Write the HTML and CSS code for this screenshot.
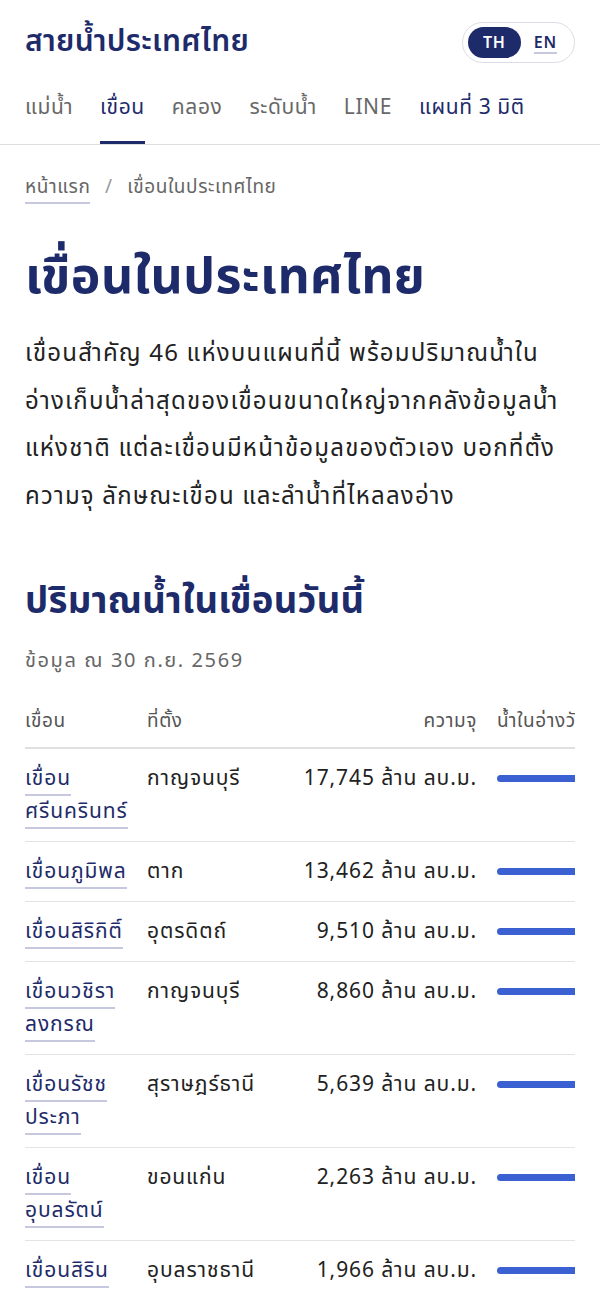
FILE: index.html
```html
<!DOCTYPE html>
<html lang="th">
<head>
  <meta charset="UTF-8">
  <title>เขื่อนในประเทศไทย - สายน้ำประเทศไทย</title>
  <link rel="stylesheet" href="styles.css">
</head>
<body>
  <header class="site-header">
    <div class="brand-row">
      <a class="brand" href="#">สายน้ำประเทศไทย</a>
      <div class="lang-toggle">
        <span class="lang active">TH</span>
        <a class="lang" href="#">EN</a>
      </div>
    </div>
    <nav class="main-nav">
      <a href="#">แม่น้ำ</a>
      <a href="#" class="current">เขื่อน</a>
      <a href="#">คลอง</a>
      <a href="#">ระดับน้ำ</a>
      <a href="#">LINE</a>
      <a href="#" class="feature">แผนที่ 3 มิติ</a>
    </nav>
  </header>

  <main class="content">
    <div class="breadcrumb">
      <a href="#">หน้าแรก</a>
      <span class="sep">/</span>
      <span>เขื่อนในประเทศไทย</span>
    </div>

    <h1>เขื่อนในประเทศไทย</h1>
    <p class="lead">เขื่อนสำคัญ 46 แห่งบนแผนที่นี้ พร้อมปริมาณน้ำใน<wbr>อ่างเก็บน้ำล่าสุดของเขื่อนขนาดใหญ่จากคลังข้อมูลน้ำ<wbr>แห่งชาติ แต่ละเขื่อนมีหน้าข้อมูลของตัวเอง บอกที่ตั้ง ความจุ ลักษณะเขื่อน และลำน้ำที่ไหลลงอ่าง</p>

    <h2>ปริมาณน้ำในเขื่อนวันนี้</h2>
    <p class="as-of">ข้อมูล ณ 30 ก.ย. 2569</p>

    <div class="table-wrap">
      <table class="dams">
        <thead>
          <tr>
            <th class="col-name">เขื่อน</th>
            <th class="col-loc">ที่ตั้ง</th>
            <th class="col-cap">ความจุ</th>
            <th class="col-fill">น้ำในอ่างวันนี้</th>
          </tr>
        </thead>
        <tbody>
          <tr>
            <td class="col-name"><a href="#">เขื่อน<wbr>ศรีนครินทร์</a></td>
            <td class="col-loc">กาญจนบุรี</td>
            <td class="col-cap">17,745 ล้าน ลบ.ม.</td>
            <td class="col-fill"><span class="bar"></span></td>
          </tr>
          <tr>
            <td class="col-name"><a href="#">เขื่อนภูมิพล</a></td>
            <td class="col-loc">ตาก</td>
            <td class="col-cap">13,462 ล้าน ลบ.ม.</td>
            <td class="col-fill"><span class="bar"></span></td>
          </tr>
          <tr>
            <td class="col-name"><a href="#">เขื่อนสิริกิติ์</a></td>
            <td class="col-loc">อุตรดิตถ์</td>
            <td class="col-cap">9,510 ล้าน ลบ.ม.</td>
            <td class="col-fill"><span class="bar"></span></td>
          </tr>
          <tr>
            <td class="col-name"><a href="#">เขื่อนวชิรา<wbr>ลงกรณ</a></td>
            <td class="col-loc">กาญจนบุรี</td>
            <td class="col-cap">8,860 ล้าน ลบ.ม.</td>
            <td class="col-fill"><span class="bar"></span></td>
          </tr>
          <tr>
            <td class="col-name"><a href="#">เขื่อนรัชช<wbr>ประภา</a></td>
            <td class="col-loc">สุราษฎร์ธานี</td>
            <td class="col-cap">5,639 ล้าน ลบ.ม.</td>
            <td class="col-fill"><span class="bar"></span></td>
          </tr>
          <tr>
            <td class="col-name"><a href="#">เขื่อน<wbr>อุบลรัตน์</a></td>
            <td class="col-loc">ขอนแก่น</td>
            <td class="col-cap">2,263 ล้าน ลบ.ม.</td>
            <td class="col-fill"><span class="bar"></span></td>
          </tr>
          <tr>
            <td class="col-name"><a href="#">เขื่อนสิริน<wbr>ธร</a></td>
            <td class="col-loc">อุบลราชธานี</td>
            <td class="col-cap">1,966 ล้าน ลบ.ม.</td>
            <td class="col-fill"><span class="bar"></span></td>
          </tr>
        </tbody>
      </table>
    </div>
  </main>
</body>
</html>
```

FILE: styles.css
```css
body {
  margin: 0;
  font-family: "Noto Sans Thai", "Noto Sans", sans-serif;
  color: #222;
  background: #fff;
}
a {
  color: inherit;
  text-decoration: none;
}
.site-header {
  border-bottom: 1px solid #dddde2;
}
.brand-row {
  display: flex;
  align-items: center;
  justify-content: space-between;
  padding: 22px 25px 0;
}
.brand {
  font-size: 30px;
  line-height: 41px;
  font-weight: 600;
  letter-spacing: 0.3px;
  color: #1e2b6a;
}
.lang-toggle {
  display: flex;
  align-items: center;
  gap: 13px;
  padding: 4px 17px 4px 5px;
  border: 1px solid #dcdde5;
  border-radius: 999px;
}
.lang {
  font-family: "Noto Sans", sans-serif;
  font-size: 16px;
  font-weight: 600;
  letter-spacing: 0.8px;
  color: #1e2b6a;
}
.lang.active {
  background: #1e2b6a;
  color: #fff;
  line-height: 31px;
  padding: 0 15px;
  border-radius: 999px;
}
a.lang {
  line-height: 20px;
  border-bottom: 2px solid #c6c8e0;
}
.main-nav {
  display: flex;
  gap: 27px;
  padding: 0 25px;
  margin-top: 30px;
}
.main-nav a {
  font-size: 21px;
  line-height: 30px;
  letter-spacing: 0.6px;
  color: #686868;
  padding-bottom: 18px;
  border-bottom: 3px solid transparent;
}
.main-nav a.current {
  color: #1e2b6a;
  border-bottom-color: #1e2b6a;
}
.main-nav a.feature {
  color: #1e2b6a;
}
.content {
  padding: 28px 25px 0;
}
.breadcrumb {
  font-size: 19px;
  line-height: 30px;
  letter-spacing: 0.6px;
  color: #666;
}
.breadcrumb a {
  border-bottom: 2px solid #c6c8e0;
}
.breadcrumb .sep {
  margin: 0 9px;
  color: #999;
}
h1 {
  font-size: 50px;
  line-height: 60px;
  font-weight: 700;
  letter-spacing: 0.4px;
  color: #1e2b6a;
  margin: 45px 0 23px;
}
.lead {
  font-size: 24px;
  line-height: 47.5px;
  letter-spacing: 1.2px;
  margin: 0;
}
h2 {
  font-size: 36.5px;
  line-height: 48px;
  font-weight: 700;
  letter-spacing: 0.3px;
  color: #1e2b6a;
  margin: 57px 0 20px;
}
.as-of {
  font-size: 20px;
  line-height: 30px;
  letter-spacing: 1.6px;
  color: #666;
  margin: 0 0 32px;
}
.table-wrap {
  overflow-x: auto;
}
.dams {
  border-collapse: collapse;
  table-layout: fixed;
  width: 632px;
  font-size: 21px;
  letter-spacing: 0.9px;
}
.dams th {
  font-size: 19px;
  line-height: 28px;
  font-weight: 400;
  letter-spacing: 0.6px;
  color: #555;
  text-align: left;
  white-space: nowrap;
  overflow: hidden;
  padding: 0 0 11px;
  border-bottom: 2px solid #e0e0e0;
}
.dams td {
  padding: 13px 0;
  line-height: 33px;
  vertical-align: top;
  border-bottom: 1px solid #e4e4e4;
}
.dams .col-name {
  width: 104px;
  padding-right: 18px;
}
.col-name a {
  color: #1e2b6a;
  border-bottom: 2px solid #c6c8e0;
}
.col-loc {
  width: 150px;
}
.dams .col-cap {
  width: 180px;
  text-align: right;
  padding-right: 20px;
  white-space: nowrap;
}
.col-fill {
  width: 160px;
}
.bar {
  display: block;
  height: 7px;
  margin-top: 13px;
  background: #3a60d1;
  border-radius: 4px;
}
```
